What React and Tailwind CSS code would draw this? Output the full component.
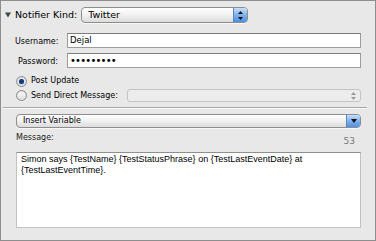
import React from 'react';

const ui = "font-['DejaVu_Sans',sans-serif]";

function Stepper({ single }) {
  return (
    <div className="w-[14px] self-stretch rounded-r-[3px] border-l border-[#5a86c0] bg-gradient-to-b from-[#c9e0fa] via-[#7fb1ee] to-[#4e8fe3] flex items-center justify-center">
      {single ? (
        <svg width="6" height="4" viewBox="0 0 6 4"><polygon points="0,0 6,0 3,4" fill="#111" /></svg>
      ) : (
        <svg width="5" height="9" viewBox="0 0 5 9">
          <polygon points="2.5,0 5,3 0,3" fill="#111" />
          <polygon points="0,6 5,6 2.5,9" fill="#111" />
        </svg>
      )}
    </div>
  );
}

function Popup({ label, width, single, size = 'text-[8px]', className = '' }) {
  return (
    <div className={`flex items-stretch rounded-[4px] border border-[#8d8d8d] bg-gradient-to-b from-white via-[#f1f1f1] to-[#dcdcdc] shadow-[0_1px_0_rgba(255,255,255,0.7)] ${width} ${className}`}>
      <div className={`flex-1 flex items-center pl-[6px] ${size} text-black`}>{label}</div>
      <Stepper single={single} />
    </div>
  );
}

function Field({ label, value, children }) {
  return (
    <div className="flex items-center h-[15px]">
      <div className="w-[43px] text-right text-[8px] text-black leading-none pt-[3px]">{label}</div>
      <div className="ml-[9px] flex-1 h-[15px] bg-white border border-[#9c9c9c] border-t-[#7d7d7d] flex items-center pl-[2px] text-[8.5px] text-black">
        {value}
        {children}
      </div>
    </div>
  );
}

function Radio({ on }) {
  return (
    <div className="w-[11px] h-[11px] rounded-full border border-[#8a8a8a] bg-gradient-to-b from-white to-[#dcdcdc] flex items-center justify-center shadow-[inset_0_1px_1px_rgba(0,0,0,0.15)]">
      {on && <div className="w-[5px] h-[5px] rounded-full bg-[#1a3d7a] shadow-[0_0_1px_#4b7fd6]" />}
    </div>
  );
}

export default function App() {
  return (
    <div className={`w-[376px] h-[241px] border border-[#8e8e8e] bg-[#e8e8e8] flex flex-col ${ui}`}>
      <div className="mt-[6px] h-[16px] flex items-center">
        <svg className="ml-[4px]" width="6" height="6" viewBox="0 0 6 6"><polygon points="0,0.5 6,0.5 3,5.5" fill="#444" /></svg>
        <span className="ml-[4px] text-[9.5px] text-black">Notifier Kind:</span>
        <Popup label="Twitter" width="w-[167px] h-[16px]" size="text-[9.5px]" className="ml-[4px]" />
      </div>

      <div className="mt-[10px] pl-[14px] pr-[14px] flex flex-col gap-[5px]">
        <Field label="Username:" value="Dejal" />
        <Field label="Password:">
          <span className="text-[10px] tracking-[-0.8px] leading-none">•••••••••</span>
        </Field>
      </div>

      <div className="mt-[7px] pl-[15px] pr-[14px] flex flex-col gap-[2px]">
        <div className="h-[12px] flex items-center gap-[4px]">
          <Radio on />
          <span className="text-[8px] text-black">Post Update</span>
        </div>
        <div className="h-[13px] flex items-center">
          <Radio />
          <span className="ml-[4px] text-[8px] text-black">Send Direct Message:</span>
          <div className="ml-[9px] flex-1 h-[13px] rounded-[3px] border border-[#c4c4c4] bg-[#ececec] flex justify-end items-center pr-[4px]">
            <svg width="5" height="8" viewBox="0 0 5 8">
              <polygon points="2.5,0 5,3 0,3" fill="#9a9a9a" />
              <polygon points="0,5 5,5 2.5,8" fill="#9a9a9a" />
            </svg>
          </div>
        </div>
      </div>

      <div className="mt-[5px] ml-[2px] mr-[8px] h-[2px] border-t border-[#a9a9a9] border-b border-b-[#f7f7f7]" />

      <div className="mt-[5px] pl-[15px] pr-[14px]">
        <Popup label="Insert Variable" width="w-full h-[14px]" single />
      </div>

      <div className="mt-[3px] pl-[15px] pr-[20px] flex justify-between h-[16px]">
        <span className="text-[8px] text-[#222] leading-[14px]">Message:</span>
        <span className="mt-[3px] text-[9px] text-[#7a7a7a] leading-[14px]">53</span>
      </div>

      <div className="mt-[5px] ml-[15px] mr-[14px] h-[76px] bg-white border border-[#c2c2c2] border-t-[#8f8f8f] px-[4px] pt-[1px] font-['Liberation_Sans',sans-serif] text-[9px] leading-[11px] text-black">
        Simon says {'{TestName}'} {'{TestStatusPhrase}'} on {'{TestLastEventDate}'} at {'{TestLastEventTime}'}.
      </div>
    </div>
  );
}
